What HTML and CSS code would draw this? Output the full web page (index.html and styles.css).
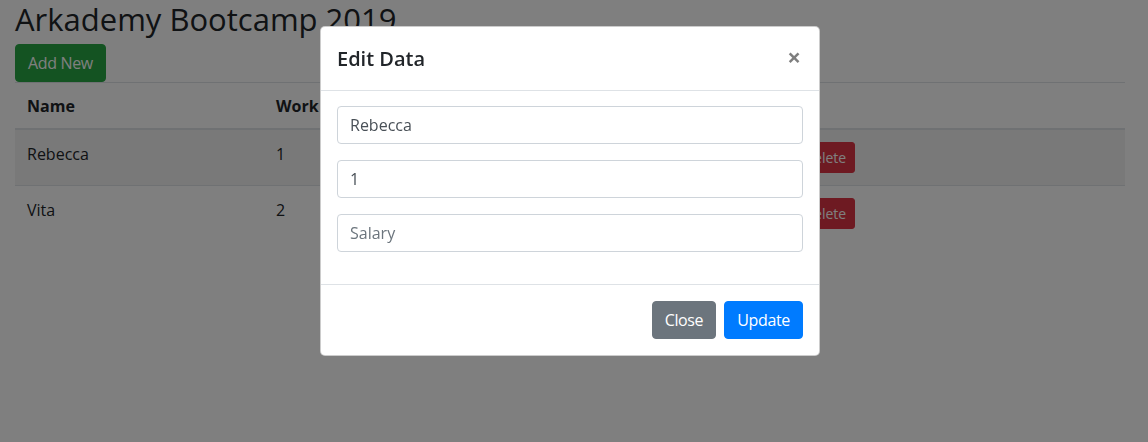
FILE: index.html
```html
<!DOCTYPE html>
<html lang="en">
<head>
<meta charset="utf-8">
<title>Arkademy Bootcamp 2019</title>
<link rel="stylesheet" href="styles.css">
</head>
<body>
<div class="page">
  <h1 class="title">Arkademy Bootcamp 2019</h1>
  <div class="toolbar"><button class="btn btn-success">Add New</button></div>
  <table class="table">
    <colgroup>
      <col class="c-name"><col class="c-work"><col class="c-salary"><col>
    </colgroup>
    <thead>
      <tr><th>Name</th><th>Work</th><th>Salary</th><th>Action</th></tr>
    </thead>
    <tbody>
      <tr class="striped">
        <td>Rebecca</td><td>1</td><td>5000000</td>
        <td><div class="actions"><button class="btn btn-sm btn-info">Edit</button><button class="btn btn-sm btn-danger">Delete</button></div></td>
      </tr>
      <tr>
        <td>Vita</td><td>2</td><td>4000000</td>
        <td><div class="actions"><button class="btn btn-sm btn-info">Edit</button><button class="btn btn-sm btn-danger">Delete</button></div></td>
      </tr>
    </tbody>
  </table>
</div>

<div class="backdrop"></div>

<div class="modal">
  <div class="modal-content">
    <div class="modal-header">
      <h5 class="modal-title">Edit Data</h5>
      <button class="close" aria-label="Close">×</button>
    </div>
    <div class="modal-body">
      <div class="form-group"><input class="form-control" type="text" value="Rebecca"></div>
      <div class="form-group"><input class="form-control" type="text" value="1"></div>
      <div class="form-group"><input class="form-control" type="text" placeholder="Salary"></div>
    </div>
    <div class="modal-footer">
      <button class="btn btn-secondary">Close</button>
      <button class="btn btn-primary">Update</button>
    </div>
  </div>
</div>
</body>
</html>
```

FILE: styles.css
```css
* { box-sizing: border-box; }

html, body {
  margin: 0;
  height: 100%;
  overflow: hidden;
}

body {
  font-family: "Open Sans", "Noto Sans", Arial, sans-serif;
  font-size: 16px;
  line-height: 1.5;
  color: #212529;
  background: #fff;
}

.page {
  width: 1140px;
  padding: 0 15px;
}

.title {
  font-size: 31px;
  line-height: 38px;
  font-weight: 500;
  margin: 0 0 6px;
}

.toolbar {
  display: flex;
}

.btn {
  display: inline-block;
  font-family: inherit;
  font-size: 16px;
  line-height: 24px;
  font-weight: 400;
  letter-spacing: -0.35px;
  padding: 6px 12px;
  border: 1px solid transparent;
  border-radius: 4px;
  color: #fff;
  cursor: pointer;
}

.btn-sm {
  font-size: 14px;
  line-height: 21px;
  letter-spacing: 0;
  padding: 4px 8px;
  border-radius: 3px;
}

.btn-success { background: #28a745; border-color: #28a745; }
.btn-danger { background: #dc3545; border-color: #dc3545; }
.btn-info { background: #17a2b8; border-color: #17a2b8; }
.btn-secondary { background: #6c757d; border-color: #6c757d; }
.btn-primary { background: #007bff; border-color: #007bff; }

.table {
  width: 100%;
  table-layout: fixed;
  border-collapse: collapse;
  margin: 0;
}

.c-name { width: 249px; }
.c-work { width: 236px; }
.c-salary { width: 236px; }

.table th {
  text-align: left;
  font-weight: 700;
  padding: 13px 12px 11px;
  line-height: 21px;
  border-top: 1px solid #dee2e6;
  border-bottom: 2px solid #dee2e6;
}

.table td {
  padding: 12px;
  vertical-align: top;
  border-top: 1px solid #dee2e6;
}

.table tbody tr:first-child td { border-top: 0; }

.striped { background: rgba(0, 0, 0, 0.05); }

.actions {
  display: flex;
  gap: 4px;
}

.backdrop {
  position: fixed;
  inset: 0;
  background: rgba(0, 0, 0, 0.5);
}

.modal {
  position: fixed;
  top: 26px;
  left: 320px;
  width: 500px;
}

.modal-content {
  background: #fff;
  border: 1px solid rgba(0, 0, 0, 0.2);
  border-radius: 5px;
  display: flex;
  flex-direction: column;
}

.modal-header {
  display: flex;
  align-items: flex-start;
  padding: 16px;
  border-bottom: 1px solid #dee2e6;
}

.modal-title {
  margin: 0;
  font-size: 20px;
  line-height: 31px;
  font-weight: 600;
}

.close {
  margin: -16px -16px -16px auto;
  padding: 18px 18px 14px 14px;
  background: transparent;
  border: 0;
  font-family: inherit;
  font-size: 24px;
  font-weight: 700;
  line-height: 1;
  color: #000;
  opacity: 0.5;
  text-shadow: 0 1px 0 #fff;
  cursor: pointer;
}

.modal-body {
  padding: 15px 16px 16px;
}

.form-group {
  margin-bottom: 16px;
}

.form-control {
  display: block;
  width: 100%;
  height: 38px;
  padding: 6px 12px;
  font-family: inherit;
  font-size: 16px;
  line-height: 24px;
  color: #495057;
  background: #fff;
  border: 1px solid #ced4da;
  border-radius: 4px;
}

.form-control::placeholder {
  color: #6c757d;
  opacity: 1;
}

.modal-footer {
  display: flex;
  justify-content: flex-end;
  align-items: center;
  padding: 12px;
  border-top: 1px solid #dee2e6;
}

.modal-footer .btn {
  margin: 4px;
}
```
